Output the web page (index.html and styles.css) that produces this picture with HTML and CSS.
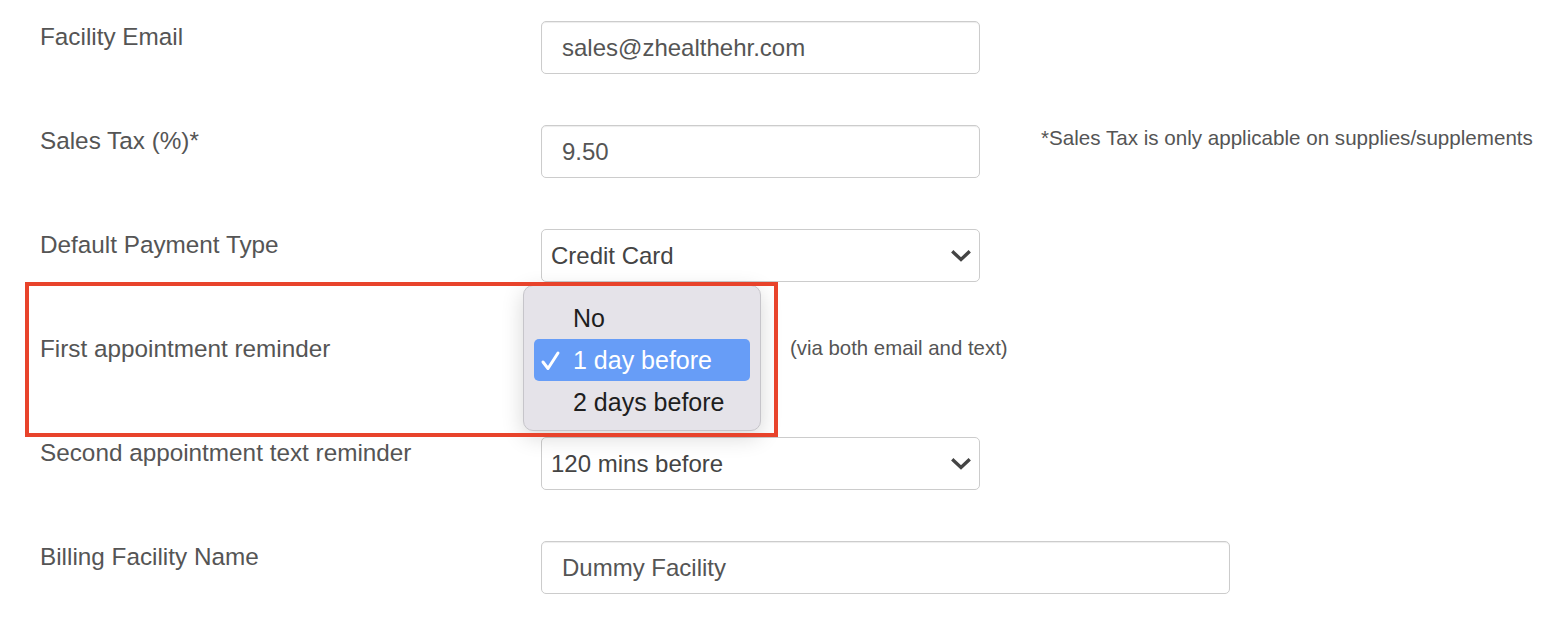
FILE: index.html
```html
<!DOCTYPE html>
<html>
<head>
<meta charset="utf-8">
<link rel="stylesheet" href="styles.css">
</head>
<body>
<div class="form">
  <div class="row">
    <div class="label">Facility Email</div>
    <div class="input w-md">sales@zhealthehr.com</div>
  </div>
  <div class="row">
    <div class="label">Sales Tax (%)*</div>
    <div class="input w-md">9.50</div>
    <div class="note note-tax">*Sales Tax is only applicable on supplies/supplements</div>
  </div>
  <div class="row">
    <div class="label">Default Payment Type</div>
    <div class="select w-md"><span>Credit Card</span>
      <svg class="chev" width="20" height="12" viewBox="0 0 20 12"><polyline points="2.5,2.5 10,9.5 17.5,2.5" fill="none" stroke="#444" stroke-width="3.4" stroke-linecap="square" stroke-linejoin="miter"/></svg>
    </div>
  </div>
  <div class="row">
    <div class="label">First appointment reminder</div>
    <div class="select-wrap">
      <div class="select w-sm"></div>
      <div class="popup">
        <div class="opt">No</div>
        <div class="opt sel"><svg class="check" width="22" height="22" viewBox="0 0 22 22"><polyline points="3,12 8,18.5 18,3" fill="none" stroke="#fff" stroke-width="3" stroke-linecap="round" stroke-linejoin="round"/></svg>1 day before</div>
        <div class="opt">2 days before</div>
      </div>
    </div>
    <div class="note note-via">(via both email and text)</div>
  </div>
  <div class="row">
    <div class="label">Second appointment text reminder</div>
    <div class="select w-md"><span>120 mins before</span>
      <svg class="chev" width="20" height="12" viewBox="0 0 20 12"><polyline points="2.5,2.5 10,9.5 17.5,2.5" fill="none" stroke="#444" stroke-width="3.4" stroke-linecap="square" stroke-linejoin="miter"/></svg>
    </div>
  </div>
  <div class="row">
    <div class="label">Billing Facility Name</div>
    <div class="input w-lg">Dummy Facility</div>
  </div>
  <div class="highlight-box"></div>
</div>
</body>
</html>
```
FILE: styles.css
```css
html, body {
  margin: 0;
  padding: 0;
  background: #fff;
}
body {
  font-family: "Liberation Sans", Arial, Helvetica, sans-serif;
  color: #555;
  width: 1562px;
  height: 620px;
  overflow: hidden;
}
.form {
  position: relative;
  padding-left: 40px;
}
.row {
  display: flex;
  align-items: flex-start;
  height: 104px;
  box-sizing: border-box;
  padding-top: 20px;
}
.label {
  width: 501px;
  flex: none;
  font-size: 24.3px;
  line-height: 34px;
  color: #555;
}
.input, .select {
  box-sizing: border-box;
  height: 53px;
  margin-top: 1px;
  border: 1px solid #ccc;
  border-radius: 5px;
  background: #fff;
  box-shadow: inset 0 1px 1px rgba(0,0,0,0.075);
  font-size: 24px;
  display: flex;
  align-items: center;
  flex: none;
}
.input {
  padding: 0 20px;
  color: #555;
}
.select {
  padding: 0 8px 0 9px;
  color: #444;
  justify-content: space-between;
  box-shadow: none;
}
.w-md { width: 439px; }
.w-lg { width: 689px; }
.w-sm { width: 220px; }
.note {
  font-size: 20.6px;
  line-height: 34px;
  color: #555;
}
.note-tax {
  margin-left: 61px;
  margin-top: -3px;
}
.note-via {
  margin-left: 29px;
  margin-top: -1px;
  font-size: 20.4px;
}
.select-wrap {
  position: relative;
  flex: none;
}
.popup {
  position: absolute;
  left: -18px;
  top: -47px;
  width: 238px;
  height: 146px;
  box-sizing: border-box;
  padding: 11px 10px 9px 10px;
  background: #e5e3e9;
  border: 1px solid #c6c5ca;
  border-radius: 10px;
  box-shadow: 0 6px 22px rgba(0,0,0,0.16);
  z-index: 2;
}
.opt {
  position: relative;
  height: 42px;
  line-height: 42px;
  padding-left: 39px;
  font-size: 25px;
  color: #1e1e1e;
  border-radius: 5px;
}
.opt.sel {
  background: #679df7;
  color: #fff;
}
.check {
  position: absolute;
  left: 6px;
  top: 11px;
}
.highlight-box {
  position: absolute;
  left: 25px;
  top: 282px;
  width: 753px;
  height: 155px;
  box-sizing: border-box;
  border: 4px solid #e8432b;
  z-index: 3;
  pointer-events: none;
}
```
